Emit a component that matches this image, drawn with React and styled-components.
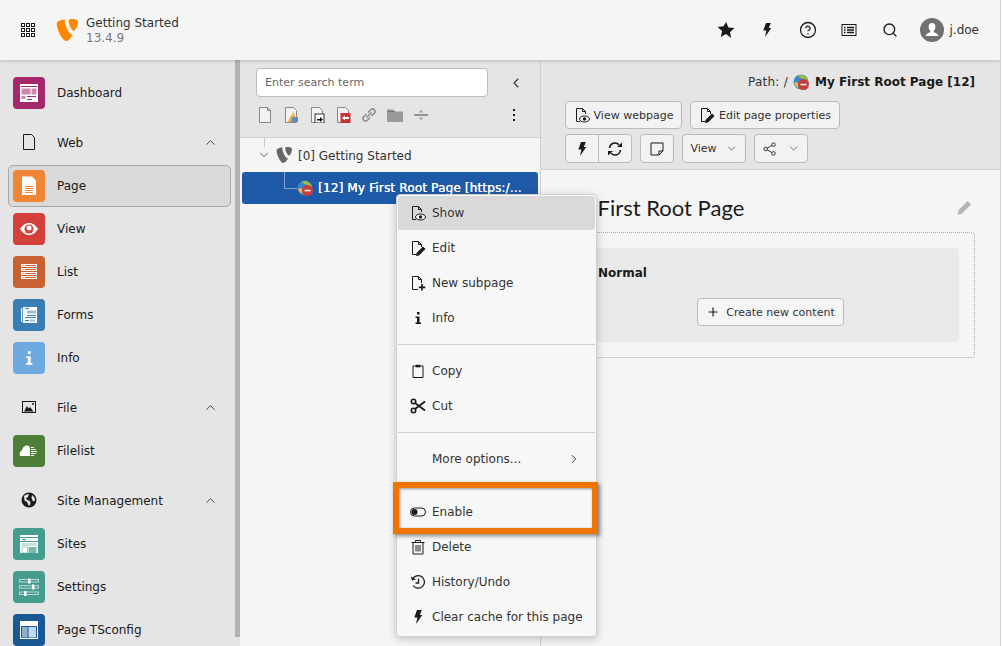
import React from 'react';
import styled, { createGlobalStyle } from 'styled-components';
import { ChevronDown, ChevronLeft, ChevronRight, ChevronUp, CircleHelp, Plus, Search } from 'lucide-react';

const GlobalStyle = createGlobalStyle`
  html, body {
    margin: 0;
    height: 100%;
    background: #fff;
    overflow: hidden;
  }
  body {
    font-family: "DejaVu Sans", Verdana, sans-serif;
    font-size: 12px;
    color: #1a1a1a;
  }
  * { box-sizing: border-box; }
`;

const Root = styled.div`
  position: relative;
  display: flex;
  flex-direction: column;
  width: 1001px;
  height: 646px;
  border-right: 1px solid #d5d5d5;
  overflow: hidden;
`;

const Topbar = styled.header`
  position: relative;
  z-index: 2;
  display: flex;
  align-items: center;
  flex: 0 0 60px;
  padding: 0 21px;
  background: #f5f5f5;
  box-shadow: 0 1px 3px rgba(0, 0, 0, 0.2);
`;

const Brand = styled.div`
  display: flex;
  align-items: center;
  gap: 8px;
  margin-left: 21px;
`;

const BrandText = styled.div`
  margin-top: 2px;
  line-height: 15px;
  font-size: 12px;
  color: #333;
  span {
    display: block;
    color: #777;
  }
`;

const TopActions = styled.div`
  display: flex;
  align-items: center;
  margin-left: auto;
`;

const TopAction = styled.div`
  display: flex;
  align-items: center;
  justify-content: center;
  width: 41px;
  height: 30px;
`;

const UserAction = styled(TopAction)`
  justify-content: flex-end;
  width: 33px;
`;

const UserName = styled.span`
  margin-left: 6px;
  color: #333;
`;

const Main = styled.div`
  display: flex;
  flex: 1;
  min-height: 0;
`;

const Sidebar = styled.nav`
  position: relative;
  flex: 0 0 240px;
  padding: 12px 9px 0 8px;
  background: #e5e5e5;
  overflow: hidden;
`;

const ScrollThumb = styled.div`
  position: absolute;
  top: 0;
  right: 0;
  width: 5px;
  height: 577px;
  background: #b4b4b4;
`;

const ModuleRow = styled.div`
  display: flex;
  align-items: flex-start;
  gap: 12px;
  height: 43px;
  padding: 5px 5px 0;
  border-radius: 5px;
  ${({ $active }) =>
    $active &&
    `
    height: 42px;
    margin-bottom: 1px;
    padding: 4px 4px 0;
    background: #d9d9d9;
    border: 1px solid #a8a8a8;
  `}
`;

const ModuleLabel = styled.span`
  line-height: 33px;
  color: #1a1a1a;
`;

const Tile = styled.span`
  display: flex;
  align-items: center;
  justify-content: center;
  flex: 0 0 32px;
  width: 32px;
  height: 32px;
  border-radius: 4px;
  background: ${({ $color }) => $color};
`;

const GroupRow = styled.div`
  display: flex;
  align-items: center;
  gap: 12px;
  height: 34px;
  margin: 10px 0 6px;
  padding: 0 13px 0 5px;
`;

const GroupIcon = styled.span`
  display: flex;
  justify-content: center;
  flex: 0 0 32px;
`;

const GroupLabel = styled.span`
  margin-top: 2px;
`;

const GroupChevron = styled(ChevronUp)`
  margin-left: auto;
  color: #444;
`;

const TreePanel = styled.section`
  display: flex;
  flex-direction: column;
  flex: 0 0 301px;
  background: #f5f5f5;
  border-right: 1px solid #d0d0d0;
`;

const TreeToolbar = styled.div`
  flex: 0 0 78px;
  padding: 8px 13px 0 12px;
  background: #e5e5e5;
  border-bottom: 1px solid #d0d0d0;
`;

const SearchRow = styled.div`
  display: flex;
  align-items: center;
  padding-left: 4px;
`;

const SearchInput = styled.div`
  flex: 0 0 232px;
  height: 29px;
  padding-left: 8px;
  line-height: 27px;
  font-size: 11px;
  color: #666;
  background: #fff;
  border: 1px solid #bbb;
  border-radius: 4px;
`;

const CollapseIcon = styled(ChevronLeft)`
  margin-left: 20px;
  color: #333;
`;

const IconRow = styled.div`
  display: flex;
  align-items: center;
  margin-top: 10px;
`;

const IconSlot = styled.span`
  display: flex;
  justify-content: center;
  flex: 0 0 26px;
`;

const Kebab = styled.span`
  display: flex;
  justify-content: center;
  margin-left: auto;
  width: 26px;
`;

const TreeBody = styled.div`
  position: relative;
  padding: 0 2px;
`;

const TreeRoot = styled.div`
  position: relative;
  display: flex;
  align-items: center;
  height: 34px;
  padding-left: 15px;
  color: #333;
  &::before {
    content: '';
    position: absolute;
    left: 22px;
    top: 0;
    height: 9px;
    border-left: 1px solid #ccc;
  }
`;

const TreeLogo = styled.span`
  display: flex;
  margin-left: 5px;
`;

const TreeRootLabel = styled.span`
  margin: 1px 0 0 6px;
`;

const SelectedRow = styled.div`
  position: relative;
  display: flex;
  align-items: center;
  height: 32px;
  padding: 0 9px 0 55px;
  color: #fff;
  font-size: 12px;
  background: #1e5aa8;
  border-radius: 3px;
  &::before {
    content: '';
    position: absolute;
    left: 42px;
    top: 0;
    width: 12px;
    height: 16px;
    border-left: 1px solid #7fa3d3;
    border-bottom: 1px solid #7fa3d3;
  }
`;

const SelectedLabel = styled.span`
  margin-left: 5px;
  overflow: hidden;
  white-space: nowrap;
  letter-spacing: 0.17px;
  text-shadow: 0.3px 0 0 #fff;
`;

const Content = styled.section`
  display: flex;
  flex-direction: column;
  flex: 1;
  min-width: 0;
  background: #f5f5f5;
`;

const DocHeader = styled.div`
  flex: 0 0 110px;
  padding: 0 24px;
  background: #e5e5e5;
  border-bottom: 1px solid #d0d0d0;
`;

const PathLine = styled.div`
  display: flex;
  align-items: center;
  justify-content: flex-end;
  height: 41px;
  padding-top: 3px;
  margin-right: 1px;
  gap: 5px;
  color: #333;
  letter-spacing: 0.25px;
  b {
    color: #1a1a1a;
    margin-left: 1px;
    letter-spacing: 0;
  }
`;

const ButtonRow = styled.div`
  display: flex;
  gap: 8px;
  margin-bottom: 5px;
`;

const Btn = styled.div`
  display: flex;
  align-items: center;
  justify-content: center;
  gap: ${({ $gap }) => $gap || 4}px;
  width: ${({ $w }) => $w}px;
  height: ${({ $h }) => $h || 28}px;
  font-size: 11px;
  color: #333;
  background: #f2f2f2;
  border: 1px solid #bbb;
  border-radius: 4px;
`;

const BtnGroup = styled.div`
  display: flex;
  ${Btn}:first-child {
    border-radius: 4px 0 0 4px;
  }
  ${Btn}:last-child {
    margin-left: -1px;
    border-radius: 0 4px 4px 0;
  }
`;

const DocBody = styled.div`
  padding: 18px 25px 0 24px;
`;

const TitleRow = styled.div`
  display: flex;
  align-items: center;
  justify-content: space-between;
  height: 39px;
  padding-right: 3px;
`;

const PageTitle = styled.h1`
  margin: 0 0 0 -4px;
  font-family: Lato, "Noto Sans", sans-serif;
  font-size: 22px;
  font-weight: 400;
  color: #1a1a1a;
`;

const GridBox = styled.div`
  height: 126px;
  margin-top: 5px;
  padding: 15px 15px 15px 16px;
  border: 1px dotted #aaa;
  border-radius: 4px;
`;

const ColumnBox = styled.div`
  display: flex;
  flex-direction: column;
  height: 94px;
  padding: 17px 16px 0;
  background: #e9e9e9;
  border-radius: 4px;
  b {
    line-height: 16px;
    color: #1a1a1a;
  }
`;

const NewContent = styled(Btn)`
  align-self: center;
  margin-top: 17px;
  gap: 6px;
  background: #f5f5f5;
`;

const ContextMenu = styled.div`
  position: absolute;
  z-index: 3;
  left: 396px;
  top: 194px;
  display: flex;
  flex-direction: column;
  gap: 1px;
  width: 201px;
  height: 443px;
  padding: 1px;
  background: #f7f7f7;
  border: 1px solid #d0d0d0;
  border-radius: 4px;
  box-shadow: 0 2px 8px rgba(0, 0, 0, 0.22);
`;

const MenuItem = styled.div`
  display: flex;
  align-items: center;
  flex: 0 0 34px;
  padding: 0 6px 0 12px;
  color: #333;
  border-radius: 3px;
  background: ${({ $hover }) => ($hover ? '#d9d9d9' : 'transparent')};
`;

const MenuIcon = styled.span`
  display: flex;
  justify-content: center;
  flex: 0 0 16px;
  margin-right: 6px;
`;

const MenuArrow = styled(ChevronRight)`
  margin-left: auto;
  margin-right: 8px;
  color: #222;
`;

const MenuDivider = styled.hr`
  flex: 0 0 1px;
  width: 100%;
  margin: ${({ $top }) => $top}px 0 ${({ $bottom }) => $bottom}px;
  border: 0;
  background: #d0d0d0;
`;

const Highlight = styled.div`
  position: absolute;
  z-index: 4;
  left: 393px;
  top: 482px;
  width: 205px;
  height: 52px;
  border: 6px solid #ee7500;
  box-shadow: 2px 2px 4px rgba(0, 0, 0, 0.45), inset 1px 1px 3px rgba(0, 0, 0, 0.4);
`;

const Glyph = ({ size = 16, box = 16, children, color = '#1a1a1a' }) => (
  <svg width={size} height={size} viewBox={`0 0 ${box} ${box}`} fill='none' stroke='none' style={{ color, flex: 'none' }}>
    {children}
  </svg>
);

const AppsIcon = () => (
  <Glyph size={14} box={14}>
    {[0, 5, 10].map((y) =>
      [0, 5, 10].map((x) => <rect key={`${x}-${y}`} x={x + 0.5} y={y + 0.5} width='3' height='3' stroke='currentColor' />),
    )}
  </Glyph>
);

const LOGO =
  'M18.08 16.54c-.36.1-.64.14-1.01.14-3.05 0-7.53-10.65-7.53-14.2 0-1.3.31-1.73.75-2.11C6.56.81 2.59 2.02 1.32 3.57c-.28.38-.45 1.05-.45 1.91C.87 11.14 6.92 24 11.19 24c1.98 0 5.31-3.25 6.89-7.46M16.09 0c3.95 0 7.9.64 7.9 2.87 0 4.52-2.87 10-4.33 10-2.6 0-5.83-7.24-5.83-10.12C13.83 1.43 14.33 0 16.09 0';

const LogoMark = ({ size = 22, color = '#ff8700' }) => (
  <Glyph size={size} box={24}>
    <path d={LOGO} fill={color} />
  </Glyph>
);

const BoltIcon = ({ size = 16 }) => (
  <Glyph size={size}>
    <path d='M7 1h4.800L9.800 6H12.300L6 15l1.400-6.500H4.300z' fill='currentColor' />
  </Glyph>
);

const StarIcon = () => (
  <Glyph size={18}>
    <path d='M8 .8l2.200 4.900 5.300.6-4 3.600 1.100 5.300L8 11.500l-4.600 2.700 1.100-5.300-4-3.600 5.300-.6z' fill='currentColor' />
  </Glyph>
);

const ListBoxIcon = () => (
  <Glyph>
    <rect x='1' y='2.500' width='14' height='11' stroke='currentColor' />
    <path d='M3 5.500h1.500M6 5.500h7M3 8h1.500M6 8h7M3 10.500h1.500M6 10.500h7' stroke='currentColor' strokeWidth='1.300' />
  </Glyph>
);

const AvatarIcon = () => (
  <Glyph size={24} box={24}>
    <circle cx='12' cy='12' r='12' fill='#707070' />
    <path d='M12 5c2.300 0 3.400 1.700 3.400 3.800 0 1.600-.7 3.200-1.700 4v1.500c2 .7 4.300 1.400 4.800 3.700H5.500c.5-2.300 2.800-3 4.800-3.700v-1.500c-1-.8-1.700-2.400-1.700-4C8.600 6.700 9.700 5 12 5z' fill='#fff' />
  </Glyph>
);

const GlobeDisabled = ({ size = 16 }) => (
  <Glyph size={size}>
    <circle cx='8' cy='8' r='7.500' fill='#3f86c6' />
    <path d='M5 1.500C8 0 13 1.500 15 7c-2 .5-3.500-.5-5-2-2-1-4-1.500-5-3.500z' fill='#9ec13c' />
    <path d='M1 9c1.500-1 3-1 4 0s1 3 0 5C3 13 1.500 11 1 9z' fill='#e6b94a' />
    <circle cx='10.500' cy='10.500' r='5.500' fill='#c83c3c' />
    <rect x='7.500' y='9.800' width='6' height='1.500' fill='#fff' />
  </Glyph>
);

const EyeOverlay = () => (
  <>
    <ellipse cx='10.500' cy='12' rx='5' ry='3' fill='#f7f7f7' stroke='currentColor' />
    <circle cx='10.500' cy='12' r='1.700' fill='currentColor' />
  </>
);

const ShowIcon = () => (
  <Glyph>
    <path d='M6 14.500H2.500v-13h6l3 3V7 M8.500 1.500v3h3' stroke='currentColor' />
    <EyeOverlay />
  </Glyph>
);

const EditIcon = () => (
  <Glyph>
    <path d='M6 14.500H2.500v-13h6l3 3V7 M8.500 1.500v3h3' stroke='currentColor' />
    <path d='M13 6.500 15.500 9 9 15.500l-3 .5.5-3z' fill='currentColor' />
  </Glyph>
);

const NewPageIcon = () => (
  <Glyph>
    <path d='M8 14.500H2.500v-13h6l3 3V8 M8.500 1.500v3h3' stroke='currentColor' />
    <path d='M12 9v6.500M8.800 12.300h6.500' stroke='currentColor' strokeWidth='1.700' />
  </Glyph>
);

const InfoGlyph = ({ color = 'currentColor', size = 16 }) => (
  <Glyph size={size}>
    <path d='M7 2h2.500v2.500H7zM5.500 6.500h4v6h1.500V14H5.500v-1.500H7V8H5.500z' fill={color} />
  </Glyph>
);

const CopyIcon = () => (
  <Glyph>
    <path d='M5.500 3H3v11.500h10V3h-2.500' stroke='currentColor' />
    <rect x='5.500' y='1.800' width='5' height='2.500' fill='currentColor' />
  </Glyph>
);

const CutIcon = () => (
  <Glyph>
    <circle cx='3.500' cy='3.500' r='2.200' stroke='currentColor' strokeWidth='1.600' />
    <circle cx='3.500' cy='12.500' r='2.200' stroke='currentColor' strokeWidth='1.600' />
    <path d='M5 5l10 7.500M5 11 15 3.500' stroke='currentColor' strokeWidth='1.800' />
  </Glyph>
);

const ToggleIcon = () => (
  <Glyph>
    <rect x='.5' y='4' width='15' height='8' rx='4' stroke='currentColor' />
    <circle cx='4.500' cy='8' r='3' fill='currentColor' />
  </Glyph>
);

const TrashIcon = () => (
  <Glyph>
    <path d='M1.500 3.500h13M5.500 3.500V1.500h5v2M3 3.500v11.500h10V3.500M6 6v6.500M8 6v6.500M10 6v6.500' stroke='currentColor' />
  </Glyph>
);

const HistoryIcon = () => (
  <Glyph>
    <path d='M2.500 5.200A6.300 6.300 0 1 1 3 11.500' stroke='currentColor' strokeWidth='1.300' />
    <path d='M.8 2.500 2 6.500 6 5.500z' fill='currentColor' />
    <path d='M8.500 4.500V9H5.500' stroke='currentColor' strokeWidth='1.300' />
  </Glyph>
);

const RefreshIcon = () => (
  <Glyph>
    <path d='M2.500 7A5.500 5.500 0 0 1 12 3.800M13.500 9A5.500 5.500 0 0 1 4 12.200' stroke='currentColor' strokeWidth='1.500' />
    <path d='M10 6h5V1.500zM6 10H1v4.500z' fill='currentColor' />
  </Glyph>
);

const NoteIcon = () => (
  <Glyph>
    <path d='M2 2h12v8l-4 4H2zM14 10h-4v4' stroke='currentColor' />
  </Glyph>
);

const ShareIcon = () => (
  <Glyph size={14}>
    <circle cx='3' cy='8' r='2' stroke='currentColor' />
    <circle cx='12' cy='3' r='2' stroke='currentColor' />
    <circle cx='12' cy='13' r='2' stroke='currentColor' />
    <path d='M4.800 7l5.400-3M4.800 9l5.400 3' stroke='currentColor' />
  </Glyph>
);

const PencilIcon = () => (
  <Glyph color='#b5b5b5'>
    <path d='M11.500 1 15 4.500 6 13.500l-4.500 1.200L2.600 10z' fill='currentColor' />
  </Glyph>
);

const ChevronSmall = styled(ChevronDown)`
  color: #555;
`;

/* module tiles */
const DashboardArt = ({ c }) => (
  <Glyph size={20} box={20}>
    <rect x='1' y='1' width='18' height='18' fill='#fff' />
    <path d='M2 3.500h16' stroke={c} />
    <rect x='2.500' y='5.500' width='9' height='6' fill={c} opacity='.55' />
    <rect x='12.500' y='5.500' width='5' height='6' fill={c} opacity='.55' />
    <rect x='2.500' y='13' width='4' height='3' fill={c} opacity='.55' />
    <path d='M8 13.500h9M8 16.500h5' stroke={c} />
  </Glyph>
);

const PageArt = ({ c }) => (
  <Glyph size={20} box={20}>
    <path d='M3 .5h10l4 4V19H3z' fill='#fff' />
    <path d='M6 10.500h8M6 12.500h8M6 14.500h8M6 16.500h8' stroke={c} />
  </Glyph>
);

const EyeArt = ({ c }) => (
  <Glyph size={20} box={20}>
    <path d='M1 10c3-4.500 6-6 9-6s6 1.500 9 6c-3 4.500-6 6-9 6s-6-1.500-9-6z' fill='#fff' />
    <circle cx='10' cy='10' r='4.500' fill={c} />
    <circle cx='10' cy='9' r='2.500' fill='#fff' />
  </Glyph>
);

const ListArt = ({ c }) => (
  <Glyph size={18} box={18}>
    {[1, 5, 9, 13].map((y) => (
      <React.Fragment key={y}>
        <rect x='1' y={y} width='16' height='3' fill='#fff' />
        <rect x='2.500' y={y + 1} width='1' height='1' fill={c} />
        <rect x='5' y={y + 1} width='11' height='1' fill={c} />
      </React.Fragment>
    ))}
  </Glyph>
);

const FormsArt = ({ c }) => (
  <Glyph size={18} box={18}>
    <rect x='3' y='1' width='14' height='16' fill='#fff' />
    <rect x='1' y='2' width='1.200' height='14' fill='#fff' />
    <rect x='7' y='4.500' width='9' height='3' fill={c} opacity='.5' />
    <path d='M5 2.500h4M7 9.500h9M5 11.500h11M5 14.500h4' stroke={c} />
    <rect x='10' y='13.500' width='5' height='2' fill={c} opacity='.5' />
  </Glyph>
);

const CloudArt = () => (
  <Glyph size={20} box={20}>
    <path d='M1 15c-1-3 .5-5 2-5.500C3.500 7 5 4.500 8 4.500c1.500 0 3 1 3 2.500v8z' fill='#fff' />
    <path d='M12 6.500h3M12 8.500h5M12 10.500h6M12 12.500h5M12 14.500h3' stroke='#fff' />
  </Glyph>
);

const SitesArt = ({ c }) => (
  <Glyph size={18} box={18}>
    <rect x='0' y='0' width='18' height='18' fill='#fff' />
    <path d='M0 2.500h18M0 6.500h18' stroke={c} />
    <rect x='2' y='4' width='4' height='1.200' fill={c} />
    <rect x='1.500' y='8' width='15' height='3' fill={c} opacity='.3' />
    <rect x='2' y='12' width='5.500' height='6' fill='#fff' stroke={c} strokeWidth='.5' />
    <rect x='8.500' y='12' width='8' height='6' fill={c} opacity='.7' />
  </Glyph>
);

const SettingsArt = () => (
  <Glyph size={22} box={22}>
    <g stroke='#fff' fill='none' opacity='.9'>
      <rect x='1.500' y='3.500' width='19' height='2.500' opacity='.7' />
      <rect x='1.500' y='9.700' width='19' height='2.500' opacity='.7' />
      <rect x='1.500' y='16' width='19' height='2.500' opacity='.7' />
    </g>
    <rect x='10' y='2.500' width='2.500' height='5' fill='#fff' />
    <rect x='14' y='8.500' width='2.500' height='5' fill='#fff' />
    <rect x='6' y='15' width='2.500' height='5' fill='#fff' />
  </Glyph>
);

const TsconfigArt = () => (
  <Glyph size={18} box={18}>
    <rect x='.5' y='.5' width='17' height='17' stroke='#fff' fill='none' />
    <rect x='1' y='1' width='16' height='4' fill='#fff' />
    <rect x='2' y='6' width='5.500' height='10.500' fill='#8fafd0' />
    <rect x='8.500' y='6' width='7.500' height='10.500' fill='#c5d7ea' />
  </Glyph>
);

const FileGroupIcon = () => (
  <Glyph size={14} box={14}>
    <rect x='.5' y='1.500' width='13' height='11' stroke='currentColor' />
    <path d='M2 11.500 5 6l1.500 2.500L8 7l3.500 4.500z' fill='currentColor' />
    <circle cx='11' cy='4' r='1' fill='currentColor' />
  </Glyph>
);

const GlobeGroupIcon = () => (
  <Glyph>
    <circle cx='8' cy='8' r='7.500' fill='currentColor' />
    <path d='M3 4c2-1.500 4-2 5-1.500L7 5 5 6l1 2 3 1 .5 3L8 14 6 10 3.500 8.500zM11 3l2.500 2.500.5 3-2 1L10.500 6z' fill='#e5e5e5' />
  </Glyph>
);

const modules = {
  dashboard: { label: 'Dashboard', color: '#a4276b', Art: DashboardArt },
  page: { label: 'Page', color: '#f08535', Art: PageArt },
  view: { label: 'View', color: '#d33f39', Art: EyeArt },
  list: { label: 'List', color: '#c96233', Art: ListArt },
  forms: { label: 'Forms', color: '#397eb4', Art: FormsArt },
  info: { label: 'Info', color: '#6daae0', Art: () => <InfoGlyph color='#fff' size={18} /> },
  filelist: { label: 'Filelist', color: '#4e7f38', Art: CloudArt },
  sites: { label: 'Sites', color: '#449d8f', Art: SitesArt },
  settings: { label: 'Settings', color: '#449d8f', Art: SettingsArt },
  tsconfig: { label: 'Page TSconfig', color: '#1a5795', Art: TsconfigArt },
};

const Module = ({ id, active }) => {
  const { label, color, Art } = modules[id];
  return (
    <ModuleRow $active={active}>
      <Tile $color={color}>
        <Art c={color} />
      </Tile>
      <ModuleLabel>{label}</ModuleLabel>
    </ModuleRow>
  );
};

const Group = ({ icon, label }) => (
  <GroupRow>
    <GroupIcon>{icon}</GroupIcon>
    <GroupLabel>{label}</GroupLabel>
    <GroupChevron size={15} strokeWidth={1.6} />
  </GroupRow>
);

const treeTools = [
  <Glyph><path d='M2.500 .5h8l3 3v12h-11z' fill='#f2f2f2' stroke='#888' /><path d='M10.500 .5v3h3' stroke='#888' /></Glyph>,
  <Glyph><path d='M2.500 .5h8l3 3v12h-11z' fill='#f2f2f2' stroke='#888' /><path d='M5 15l3-7 1 1 1-5 2 5v6z' fill='#eeaa33' /><rect x='9' y='10' width='6' height='5' fill='#5b8ec7' /></Glyph>,
  <Glyph><path d='M2.500 .5h8l3 3v12h-11z' fill='#f2f2f2' stroke='#888' /><rect x='6' y='7' width='9' height='9' fill='#fff' stroke='#333' /><path d='M8 12h3V10l3 2.500L11 15v-1.500H8z' fill='#111' /></Glyph>,
  <Glyph><path d='M2.500 .5h8l3 3v12h-11z' fill='#f2f2f2' stroke='#888' /><rect x='5.500' y='6' width='10' height='10' fill='#c83232' /><path d='M7 11l3-2.500V10h4v2h-4v1.500z' fill='#fff' /></Glyph>,
  <Glyph><path d='M7 5.500 10 2.500a2.500 2.500 0 0 1 3.500 3.500l-3 3M9 10.500 6 13.500A2.500 2.500 0 0 1 2.500 10l3-3M5.500 10.500l5-5' stroke='#888' strokeWidth='1.500' /></Glyph>,
  <Glyph><path d='M0 2.500h6.500l1.500 2h8v10.500H0z' fill='#999' /><path d='M0 4.500h8' stroke='#777' /></Glyph>,
  <Glyph><path d='M1 8h14' stroke='#777' strokeWidth='1.500' /><path d='M8 2.500 5.500 5.500h5zM8 13.500l-2.500-3h5z' fill='#aaa' /></Glyph>,
];

const menu = [
  [
    { label: 'Show', Icon: ShowIcon, hover: true },
    { label: 'Edit', Icon: EditIcon },
    { label: 'New subpage', Icon: NewPageIcon },
    { label: 'Info', Icon: InfoGlyph },
  ],
  [
    { label: 'Copy', Icon: CopyIcon },
    { label: 'Cut', Icon: CutIcon },
  ],
  [{ label: 'More options...', more: true }],
  [
    { label: 'Enable', Icon: ToggleIcon },
    { label: 'Delete', Icon: TrashIcon },
    { label: 'History/Undo', Icon: HistoryIcon },
    { label: 'Clear cache for this page', Icon: BoltIcon },
  ],
];

const dividerGaps = [null, [8, 8], [8, 8], [9, 7]];

const App = () => (
  <Root>
    <GlobalStyle />
    <Topbar>
      <AppsIcon />
      <Brand>
        <LogoMark />
        <BrandText>
          Getting Started
          <span>13.4.9</span>
        </BrandText>
      </Brand>
      <TopActions>
        <TopAction><StarIcon /></TopAction>
        <TopAction><BoltIcon /></TopAction>
        <TopAction><CircleHelp size={18} strokeWidth={1.7} color='#1a1a1a' /></TopAction>
        <TopAction><ListBoxIcon /></TopAction>
        <TopAction><Search size={16} strokeWidth={2} color='#1a1a1a' /></TopAction>
        <UserAction><AvatarIcon /></UserAction>
        <UserName>j.doe</UserName>
      </TopActions>
    </Topbar>

    <Main>
      <Sidebar>
        <ScrollThumb />
        <Module id='dashboard' />
        <Group icon={<Glyph><path d='M2.500 .5h8l3 3v12h-11z' stroke='currentColor' /></Glyph>} label='Web' />
        <Module id='page' active />
        <Module id='view' />
        <Module id='list' />
        <Module id='forms' />
        <Module id='info' />
        <Group icon={<FileGroupIcon />} label='File' />
        <Module id='filelist' />
        <Group icon={<GlobeGroupIcon />} label='Site Management' />
        <Module id='sites' />
        <Module id='settings' />
        <Module id='tsconfig' />
      </Sidebar>

      <TreePanel>
        <TreeToolbar>
          <SearchRow>
            <SearchInput>Enter search term</SearchInput>
            <CollapseIcon size={16} strokeWidth={1.6} />
          </SearchRow>
          <IconRow>
            {treeTools.map((tool, i) => (
              <IconSlot key={i}>{tool}</IconSlot>
            ))}
            <Kebab>
              <Glyph><path d='M8 2v2M8 7v2M8 12v2' stroke='#1a1a1a' strokeWidth='2' /></Glyph>
            </Kebab>
          </IconRow>
        </TreeToolbar>
        <TreeBody>
          <TreeRoot>
            <ChevronSmall size={14} strokeWidth={1.6} />
            <TreeLogo><LogoMark size={16} color='#666' /></TreeLogo>
            <TreeRootLabel>[0] Getting Started</TreeRootLabel>
          </TreeRoot>
          <SelectedRow>
            <GlobeDisabled />
            <SelectedLabel>[12] My First Root Page [https:/...</SelectedLabel>
          </SelectedRow>
        </TreeBody>
      </TreePanel>

      <Content>
        <DocHeader>
          <PathLine>
            Path: /
            <GlobeDisabled />
            <b>My First Root Page [12]</b>
          </PathLine>
          <ButtonRow>
            <Btn $w={117}><ShowIcon />View webpage</Btn>
            <Btn $w={150}><EditIcon />Edit page properties</Btn>
          </ButtonRow>
          <ButtonRow>
            <BtnGroup>
              <Btn $w={34} $h={29}><BoltIcon /></Btn>
              <Btn $w={34} $h={29}><RefreshIcon /></Btn>
            </BtnGroup>
            <Btn $w={34} $h={29}><NoteIcon /></Btn>
            <Btn $w={64} $h={29} $gap={8}>View<ChevronSmall size={13} strokeWidth={1.5} /></Btn>
            <Btn $w={54} $h={29} $gap={10}><ShareIcon /><ChevronSmall size={13} strokeWidth={1.5} /></Btn>
          </ButtonRow>
        </DocHeader>
        <DocBody>
          <TitleRow>
            <PageTitle>My First Root Page</PageTitle>
            <PencilIcon />
          </TitleRow>
          <GridBox>
            <ColumnBox>
              <b>Normal</b>
              <NewContent $w={147} $h={28}>
                <Plus size={14} strokeWidth={2} color='#1a1a1a' />
                Create new content
              </NewContent>
            </ColumnBox>
          </GridBox>
        </DocBody>
      </Content>
    </Main>

    <ContextMenu>
      {menu.map((section, i) => (
        <React.Fragment key={i}>
          {i > 0 && <MenuDivider $top={dividerGaps[i][0]} $bottom={dividerGaps[i][1]} />}
          {section.map(({ label, Icon, hover, more }) => (
            <MenuItem key={label} $hover={hover}>
              <MenuIcon>{Icon && <Icon />}</MenuIcon>
              {label}
              {more && <MenuArrow size={14} strokeWidth={1.6} />}
            </MenuItem>
          ))}
        </React.Fragment>
      ))}
    </ContextMenu>
    <Highlight />
  </Root>
);

export default App;
